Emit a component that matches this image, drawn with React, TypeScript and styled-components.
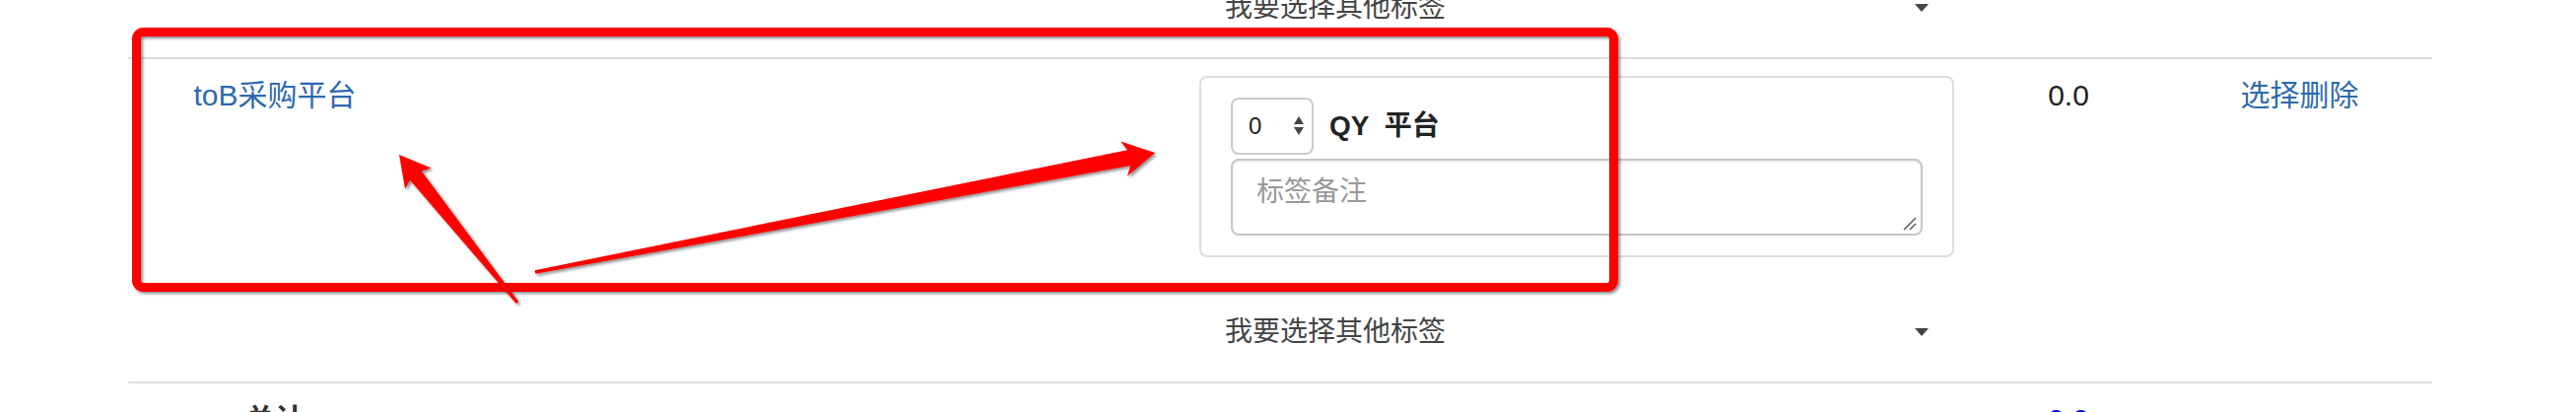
import React from "react";
import styled, { createGlobalStyle } from "styled-components";

const GlobalStyle = createGlobalStyle`
  html, body { margin: 0; padding: 0; background: #fff; overflow: hidden; }
  body { font-family: "Liberation Sans", "Noto Sans CJK SC", sans-serif; color: #333; }
  * { box-sizing: border-box; }
`;

const Page = styled.div`
  position: relative;
  width: 2614px;
  height: 418px;
  overflow: hidden;
  background: #fff;
`;

const Table = styled.div`
  margin: -44px 0 0 130px;
  width: 2338px;
  display: flex;
  flex-direction: column;
`;

const Row = styled.div`
  display: grid;
  grid-template-columns: 298px 773px 798px 200px 269px;
  border-top: 2px solid #ddd;
`;

const Cell = styled.div<{ $align?: "left" | "center" }>`
  padding: 16px;
  font-size: 30px;
  line-height: 42px;
  text-align: ${(p) => p.$align ?? "center"};
`;

const Link = styled.a`
  color: #2d69b0;
  text-decoration: none;
  cursor: pointer;
`;

const Amount = styled.span<{ $total?: boolean }>`
  color: ${(p) => (p.$total ? "#0000ff" : "#222")};
  font-weight: ${(p) => (p.$total ? "bold" : "normal")};
`;

const TotalLabel = styled.span`
  color: #333;
  font-weight: bold;
`;

const TagColumn = styled.div`
  display: flex;
  flex-direction: column;
`;

const Panel = styled.div`
  margin: 1px 0 42px;
  border: 2px solid #ddd;
  border-radius: 8px;
  padding: 20px 30px;
  display: flex;
  flex-direction: column;
  gap: 4px;
`;

const TagHeader = styled.div`
  display: flex;
  align-items: center;
  gap: 16px;
`;

const NumberSelect = styled.div`
  width: 84px;
  height: 58px;
  border: 2px solid #ccc;
  border-radius: 8px;
  background: #fff;
  display: flex;
  align-items: center;
  justify-content: space-between;
  padding: 0 8px 0 16px;
  font-size: 24px;
  line-height: 30px;
  color: #222;
`;

const TagName = styled.span`
  font-size: 28px;
  line-height: 40px;
  font-weight: bold;
  color: #222;
  word-spacing: 8px;
`;

const NoteBox = styled.div`
  position: relative;
  height: 78px;
  border: 2px solid #c6c6c6;
  border-radius: 8px;
  box-shadow: inset 0 2px 2px rgba(0, 0, 0, 0.075);
  padding: 12px 24px;
  font-size: 28px;
  line-height: 40px;
  color: #999;
  text-align: left;
`;

const Grip = styled.svg`
  position: absolute;
  right: 3px;
  bottom: 2px;
`;

const TagSelect = styled.div`
  height: 68px;
  display: flex;
  align-items: center;
  justify-content: space-between;
  padding: 0 26px;
  font-size: 28px;
  line-height: 40px;
  color: #444;
`;

const Overlay = styled.svg`
  position: absolute;
  top: 0;
  left: 0;
  pointer-events: none;
`;

type Pt = [number, number];

function arrowPoints(
  tail: Pt,
  tip: Pt,
  o: { head: number; notch: number; barb: number; neck: number; end: number }
) {
  const dx = tail[0] - tip[0];
  const dy = tail[1] - tip[1];
  const L = Math.hypot(dx, dy);
  const ux = dx / L;
  const uy = dy / L;
  const nx = -uy;
  const ny = ux;
  const p = (along: number, side: number) =>
    `${(tip[0] + ux * along + nx * side).toFixed(1)},${(tip[1] + uy * along + ny * side).toFixed(1)}`;
  return [
    p(0, 0),
    p(o.head, o.barb),
    p(o.notch, o.neck),
    p(L, o.end),
    p(L, -o.end),
    p(o.notch, -o.neck),
    p(o.head, -o.barb),
  ].join(" ");
}

const Caret = () => (
  <svg width="14" height="8" viewBox="0 0 14 8">
    <polygon points="0,0 14,0 7,8" fill="#444" />
  </svg>
);

const Spinner = () => (
  <svg width="10" height="20" viewBox="0 0 10 20">
    <polygon points="5,0 10,8 0,8" fill="#444" />
    <polygon points="0,11 10,11 5,19" fill="#444" />
  </svg>
);

const OtherTagSelect = () => (
  <TagSelect>
    <span>我要选择其他标签</span>
    <Caret />
  </TagSelect>
);

export default function App() {
  return (
    <>
      <GlobalStyle />
      <Page>
        <Table>
          <Row>
            <Cell />
            <Cell />
            <Cell>
              <TagColumn>
                <OtherTagSelect />
              </TagColumn>
            </Cell>
            <Cell />
            <Cell />
          </Row>
          <Row>
            <Cell>
              <Link>toB采购平台</Link>
            </Cell>
            <Cell />
            <Cell>
              <TagColumn>
                <Panel>
                  <TagHeader>
                    <NumberSelect>
                      <span>0</span>
                      <Spinner />
                    </NumberSelect>
                    <TagName>QY 平台</TagName>
                  </TagHeader>
                  <NoteBox>
                    标签备注
                    <Grip width="16" height="16" viewBox="0 0 16 16">
                      <line x1="14" y1="2" x2="2" y2="14" stroke="#555" strokeWidth="1.5" />
                      <line x1="14" y1="8" x2="8" y2="14" stroke="#555" strokeWidth="1.5" />
                    </Grip>
                  </NoteBox>
                </Panel>
                <OtherTagSelect />
              </TagColumn>
            </Cell>
            <Cell>
              <Amount>0.0</Amount>
            </Cell>
            <Cell>
              <Link>选择删除</Link>
            </Cell>
          </Row>
          <Row>
            <Cell>
              <TotalLabel>总计</TotalLabel>
            </Cell>
            <Cell />
            <Cell />
            <Cell>
              <Amount $total>0.0</Amount>
            </Cell>
            <Cell />
          </Row>
        </Table>
        <Overlay width="2614" height="418" viewBox="0 0 2614 418">
          <defs>
            <filter id="annoShadow" x="-5%" y="-5%" width="110%" height="120%">
              <feDropShadow dx="2" dy="2" stdDeviation="1.5" floodColor="#000" floodOpacity="0.45" />
            </filter>
          </defs>
          <rect
            x="138.5"
            y="32.5"
            width="1499"
            height="259"
            rx="7"
            fill="none"
            stroke="#fe0000"
            strokeWidth="9"
            filter="url(#annoShadow)"
          />
          <polygon
            points={arrowPoints([525, 307], [405, 157], { head: 31, notch: 27, barb: 17, neck: 7.5, end: 1.5 })}
            fill="#fe0000"
            filter="url(#annoShadow)"
          />
          <polygon
            points={arrowPoints([543, 276], [1172, 155], { head: 32, notch: 27, barb: 18, neck: 8, end: 1.8 })}
            fill="#fe0000"
            filter="url(#annoShadow)"
          />
        </Overlay>
      </Page>
    </>
  );
}
